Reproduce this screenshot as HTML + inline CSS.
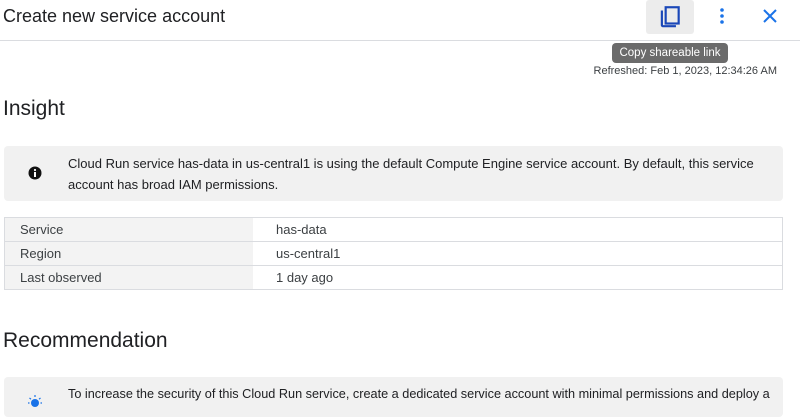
<!DOCTYPE html><html><head><style>
body{margin:0;width:800px;height:405px;overflow:hidden;background:#fff;font-family:"Liberation Sans",sans-serif;color:#202124;position:relative}
.a{position:absolute}
td{padding:0 0 0 15px;height:23px;font-size:13px;color:#3c4043;border-bottom:1px solid #dadce0}
</style></head><body>
<div class="a" style="left:3px;top:6px;font-size:18px">Create new service account</div>
<div class="a" style="left:0;top:40px;width:800px;height:1px;background:#dadce0"></div>
<div class="a" style="left:646px;top:0;width:48px;height:34px;background:#ececec;border-radius:3px"></div>
<svg class="a" style="left:657px;top:4px" width="26" height="26" viewBox="0 0 24 24"><path d="M3.5 6v13.5a2 2 0 0 0 2 2h12v-2H5.5V6z" fill="#1a47b8"/><rect x="8" y="3" width="12" height="15" fill="none" stroke="#1a47b8" stroke-width="2"/></svg>
<svg class="a" style="left:712px;top:6px" width="20" height="20"><circle cx="10" cy="4" r="1.8" fill="#1a73e8"/><circle cx="10" cy="10" r="1.8" fill="#1a73e8"/><circle cx="10" cy="16" r="1.8" fill="#1a73e8"/></svg>
<svg class="a" style="left:762px;top:8px" width="16" height="16"><path d="M2 2L14 14M14 2L2 14" stroke="#1a73e8" stroke-width="2"/></svg>
<div class="a" style="left:612px;top:43px;width:116px;height:20px;background:#6b6b6b;border-radius:4px;color:#fff;font-size:11.5px;line-height:20px;text-align:center">Copy shareable link</div>
<div class="a" style="right:23px;top:65px;font-size:11px;color:#3c4043">Refreshed: Feb 1, 2023, 12:34:26 AM</div>
<div class="a" style="left:3px;top:97px;font-size:21px">Insight</div>
<div class="a" style="left:4px;top:146px;width:779px;height:55px;background:#f1f1f1;border-radius:4px"></div>
<svg class="a" style="left:28px;top:166px" width="14" height="14"><circle cx="7" cy="7" r="6.5" fill="#111"/><rect x="6" y="6" width="2" height="5" fill="#fff"/><circle cx="7" cy="4" r="1.1" fill="#fff"/></svg>
<div class="a" style="left:68px;top:153px;width:700px;font-size:13px;line-height:21px">Cloud Run service has-data in us-central1 is using the default Compute Engine service account. By default, this service account has broad IAM permissions.</div>
<table class="a" style="left:4px;top:217px;width:779px;border-collapse:collapse;border:1px solid #dadce0;border-bottom:none">
<tr><td style="width:233px;background:#f3f3f3">Service</td><td style="padding-left:23px">has-data</td></tr>
<tr><td style="background:#f3f3f3">Region</td><td style="padding-left:23px">us-central1</td></tr>
<tr><td style="background:#f3f3f3">Last observed</td><td style="padding-left:23px">1 day ago</td></tr>
</table>
<div class="a" style="left:3px;top:329px;font-size:21px">Recommendation</div>
<div class="a" style="left:4px;top:377px;width:779px;height:40px;background:#f1f1f1;border-radius:4px"></div>
<svg class="a" style="left:28px;top:394px" width="14" height="14"><circle cx="7" cy="9" r="4" fill="#1a73e8"/><path d="M7 1v2M1.5 4l1.5 1.2M12.5 4L11 5.2M0 9h1.5M12.5 9H14" stroke="#1a73e8" stroke-width="1.2"/></svg>
<div class="a" style="left:68px;top:387px;font-size:12.7px">To increase the security of this Cloud Run service, create a dedicated service account with minimal permissions and deploy a</div>
</body></html>
